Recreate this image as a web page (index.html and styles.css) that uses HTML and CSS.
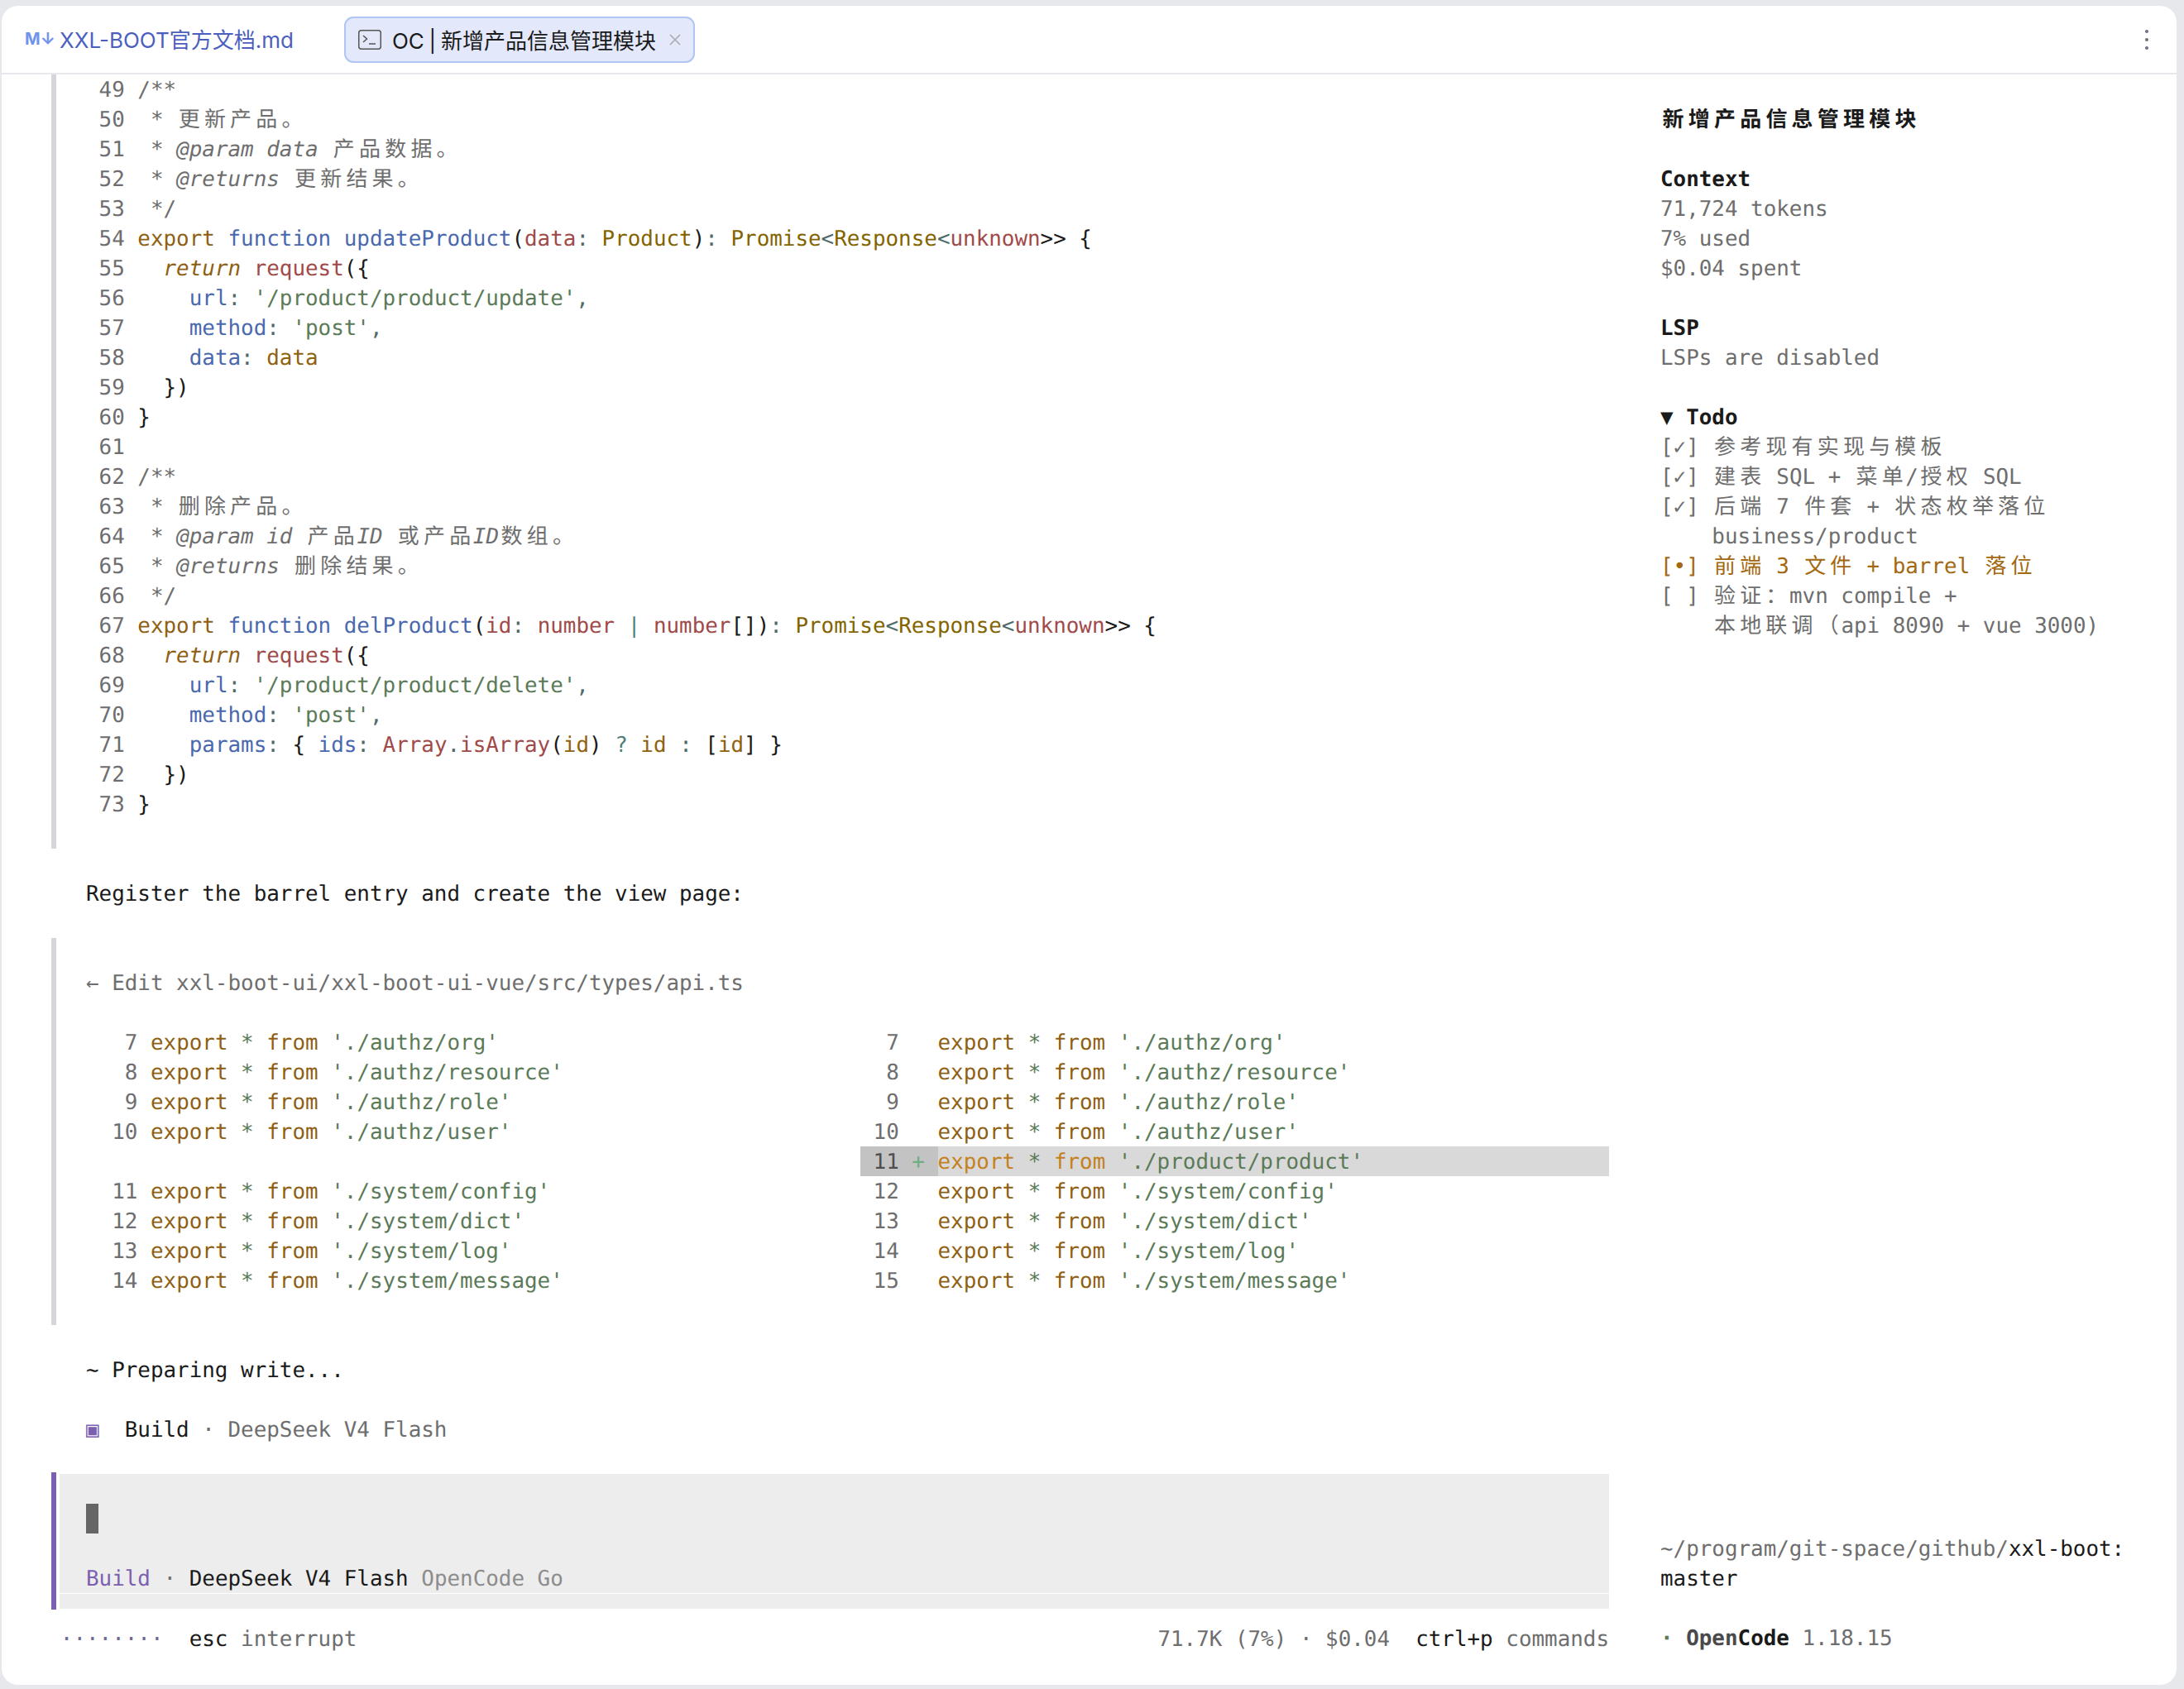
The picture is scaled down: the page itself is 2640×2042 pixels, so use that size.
FILE: index.html
```html
<!DOCTYPE html>
<html lang="zh-CN">
<head>
    <meta charset="UTF-8">
    <meta name="viewport" content="width=device-width, initial-scale=1.0">
    <title>OC | 新增产品信息管理模块</title>
    <link rel="stylesheet" href="styles.css">
</head>
<body>
    <div class="window">
        <header class="tabs">
            <div class="tab">
                <span class="md-mark">M↓</span>
                <span>XXL-BOOT官方文档.md</span>
            </div>
            <div class="tab tab-active">
                <svg class="term-icon" viewBox="0 0 28 24" width="28" height="24">
                    <rect x="0.75" y="0.75" width="26.5" height="22.5" rx="3" fill="none" stroke="#555" stroke-width="1.5"/>
                    <path d="M6 7l4.5 4L6 15M13 17h8" fill="none" stroke="#555" stroke-width="1.5"/>
                </svg>
                <span class="tab-title">OC | 新增产品信息管理模块</span>
                <svg class="close-icon" viewBox="0 0 16 14" width="16" height="14">
                    <path d="M2 1l12 12M14 1L2 13" fill="none" stroke="#a9a9ad" stroke-width="1.6"/>
                </svg>
            </div>
            <div class="kebab"><i></i><i></i><i></i></div>
        </header>

        <div class="term">
            <main class="main">
                <div class="tool">
                    <div class="row"><span class="ln"> 49</span> <span class="cm">/**</span></div>
                    <div class="row"><span class="ln"> 50</span> <span class="cm"> * <span class="zh">更新产品。</span></span></div>
                    <div class="row"><span class="ln"> 51</span> <span class="cm"> * <em>@param data</em> <span class="zh">产品数据。</span></span></div>
                    <div class="row"><span class="ln"> 52</span> <span class="cm"> * <em>@returns</em> <span class="zh">更新结果。</span></span></div>
                    <div class="row"><span class="ln"> 53</span> <span class="cm"> */</span></div>
                    <div class="row"><span class="ln"> 54</span> <span class="kw">export</span> <span class="fn">function updateProduct</span>(<span class="pr">data</span><span class="pu">:</span> <span class="ty">Product</span>)<span class="pu">:</span> <span class="ty">Promise</span><span class="pu">&lt;</span><span class="ty">Response</span><span class="pu">&lt;</span><span class="pr">unknown</span>&gt;&gt; {</div>
                    <div class="row"><span class="ln"> 55</span>   <em class="kw">return</em> <span class="pr">request</span>({</div>
                    <div class="row"><span class="ln"> 56</span>     <span class="fn">url</span><span class="pu">:</span> <span class="st">'/product/product/update'</span><span class="pu">,</span></div>
                    <div class="row"><span class="ln"> 57</span>     <span class="fn">method</span><span class="pu">:</span> <span class="st">'post'</span><span class="pu">,</span></div>
                    <div class="row"><span class="ln"> 58</span>     <span class="fn">data</span><span class="pu">:</span> <span class="vr">data</span></div>
                    <div class="row"><span class="ln"> 59</span>   })</div>
                    <div class="row"><span class="ln"> 60</span> }</div>
                    <div class="row"><span class="ln"> 61</span></div>
                    <div class="row"><span class="ln"> 62</span> <span class="cm">/**</span></div>
                    <div class="row"><span class="ln"> 63</span> <span class="cm"> * <span class="zh">删除产品。</span></span></div>
                    <div class="row"><span class="ln"> 64</span> <span class="cm"> * <em>@param id</em> <span class="zh">产品</span><em>ID</em> <span class="zh">或产品</span><em>ID</em><span class="zh">数组。</span></span></div>
                    <div class="row"><span class="ln"> 65</span> <span class="cm"> * <em>@returns</em> <span class="zh">删除结果。</span></span></div>
                    <div class="row"><span class="ln"> 66</span> <span class="cm"> */</span></div>
                    <div class="row"><span class="ln"> 67</span> <span class="kw">export</span> <span class="fn">function delProduct</span>(<span class="pr">id</span><span class="pu">:</span> <span class="pr">number</span> <span class="op">|</span> <span class="pr">number</span>[])<span class="pu">:</span> <span class="ty">Promise</span><span class="pu">&lt;</span><span class="ty">Response</span><span class="pu">&lt;</span><span class="pr">unknown</span>&gt;&gt; {</div>
                    <div class="row"><span class="ln"> 68</span>   <em class="kw">return</em> <span class="pr">request</span>({</div>
                    <div class="row"><span class="ln"> 69</span>     <span class="fn">url</span><span class="pu">:</span> <span class="st">'/product/product/delete'</span><span class="pu">,</span></div>
                    <div class="row"><span class="ln"> 70</span>     <span class="fn">method</span><span class="pu">:</span> <span class="st">'post'</span><span class="pu">,</span></div>
                    <div class="row"><span class="ln"> 71</span>     <span class="fn">params</span><span class="pu">:</span> { <span class="fn">ids</span><span class="pu">:</span> <span class="pr">Array</span><span class="pu">.</span><span class="pr">isArray</span>(<span class="vr">id</span>) <span class="op">?</span> <span class="vr">id</span> <span class="pu">:</span> [<span class="vr">id</span>] }</div>
                    <div class="row"><span class="ln"> 72</span>   })</div>
                    <div class="row"><span class="ln"> 73</span> }</div>
                    <div class="row"></div>
                </div>

                <div class="row"></div>
                <div class="row">Register the barrel entry and create the view page:</div>
                <div class="row"></div>

                <div class="tool">
                    <div class="row"></div>
                    <div class="row muted">← Edit xxl-boot-ui/xxl-boot-ui-vue/src/types/api.ts</div>
                    <div class="row"></div>
                    <div class="diff">
                        <div class="diff-left">
                            <div class="row"><span class="ln">   7</span> <span class="kw">export</span> <span class="st">*</span> <span class="kw">from</span> <span class="st">'./authz/org'</span></div>
                            <div class="row"><span class="ln">   8</span> <span class="kw">export</span> <span class="st">*</span> <span class="kw">from</span> <span class="st">'./authz/resource'</span></div>
                            <div class="row"><span class="ln">   9</span> <span class="kw">export</span> <span class="st">*</span> <span class="kw">from</span> <span class="st">'./authz/role'</span></div>
                            <div class="row"><span class="ln">  10</span> <span class="kw">export</span> <span class="st">*</span> <span class="kw">from</span> <span class="st">'./authz/user'</span></div>
                            <div class="row"></div>
                            <div class="row"><span class="ln">  11</span> <span class="kw">export</span> <span class="st">*</span> <span class="kw">from</span> <span class="st">'./system/config'</span></div>
                            <div class="row"><span class="ln">  12</span> <span class="kw">export</span> <span class="st">*</span> <span class="kw">from</span> <span class="st">'./system/dict'</span></div>
                            <div class="row"><span class="ln">  13</span> <span class="kw">export</span> <span class="st">*</span> <span class="kw">from</span> <span class="st">'./system/log'</span></div>
                            <div class="row"><span class="ln">  14</span> <span class="kw">export</span> <span class="st">*</span> <span class="kw">from</span> <span class="st">'./system/message'</span></div>
                        </div>
                        <div class="diff-right">
                            <div class="row"><span class="ln">  7</span>   <span class="kw">export</span> <span class="st">*</span> <span class="kw">from</span> <span class="st">'./authz/org'</span></div>
                            <div class="row"><span class="ln">  8</span>   <span class="kw">export</span> <span class="st">*</span> <span class="kw">from</span> <span class="st">'./authz/resource'</span></div>
                            <div class="row"><span class="ln">  9</span>   <span class="kw">export</span> <span class="st">*</span> <span class="kw">from</span> <span class="st">'./authz/role'</span></div>
                            <div class="row"><span class="ln"> 10</span>   <span class="kw">export</span> <span class="st">*</span> <span class="kw">from</span> <span class="st">'./authz/user'</span></div>
                            <div class="row row-added">
                                <span class="gutter"><span class="ln-add"> 11</span> <span class="plus">+</span> </span><span class="added-code"><span class="kw-add">export</span> <span class="st">*</span> <span class="kw-add">from</span> <span class="st">'./product/product'</span></span>
                            </div>
                            <div class="row"><span class="ln"> 12</span>   <span class="kw">export</span> <span class="st">*</span> <span class="kw">from</span> <span class="st">'./system/config'</span></div>
                            <div class="row"><span class="ln"> 13</span>   <span class="kw">export</span> <span class="st">*</span> <span class="kw">from</span> <span class="st">'./system/dict'</span></div>
                            <div class="row"><span class="ln"> 14</span>   <span class="kw">export</span> <span class="st">*</span> <span class="kw">from</span> <span class="st">'./system/log'</span></div>
                            <div class="row"><span class="ln"> 15</span>   <span class="kw">export</span> <span class="st">*</span> <span class="kw">from</span> <span class="st">'./system/message'</span></div>
                        </div>
                    </div>
                    <div class="row"></div>
                </div>

                <div class="row"></div>
                <div class="row">~ Preparing write...</div>
                <div class="row"></div>
                <div class="row"><span class="violet">▣</span>  Build <span class="muted">· DeepSeek V4 Flash</span></div>
                <div class="row"></div>

                <div class="prompt">
                    <div class="prompt-box">
                        <div class="row"></div>
                        <div class="row"><span class="cursor"></span></div>
                        <div class="row"></div>
                        <div class="row"><span class="violet">Build</span> <span class="muted">·</span> DeepSeek V4 Flash <span class="faint">OpenCode Go</span></div>
                    </div>
                    <div class="prompt-end"></div>
                </div>

                <div class="row status">
                    <span><span class="spinner">········</span>  esc <span class="muted">interrupt</span></span>
                    <span><span class="muted">71.7K (7%) · $0.04</span>  ctrl+p <span class="muted">commands</span></span>
                </div>
            </main>

            <aside class="side">
                <div class="row"></div>
                <div class="row"><strong class="zh">新增产品信息管理模块</strong></div>
                <div class="row"></div>
                <div class="row"><strong>Context</strong></div>
                <div class="row muted">71,724 tokens</div>
                <div class="row muted">7% used</div>
                <div class="row muted">$0.04 spent</div>
                <div class="row"></div>
                <div class="row"><strong>LSP</strong></div>
                <div class="row muted">LSPs are disabled</div>
                <div class="row"></div>
                <div class="row"><strong>▼ Todo</strong></div>
                <div class="row muted">[✓] <span class="zh">参考现有实现与模板</span></div>
                <div class="row muted">[✓] <span class="zh">建表</span> SQL + <span class="zh">菜单</span>/<span class="zh">授权</span> SQL</div>
                <div class="row muted">[✓] <span class="zh">后端</span> 7 <span class="zh">件套</span> + <span class="zh">状态枚举落位</span></div>
                <div class="row muted">    business/product</div>
                <div class="row amber">[•] <span class="zh">前端</span> 3 <span class="zh">文件</span> + barrel <span class="zh">落位</span></div>
                <div class="row muted">[ ] <span class="zh">验证：</span>mvn compile +</div>
                <div class="row muted">    <span class="zh">本地联调（</span>api 8090 + vue 3000)</div>

                <div class="side-foot">
                    <div class="row"><span class="muted">~/program/git-space/github/</span>xxl-boot:</div>
                    <div class="row">master</div>
                    <div class="row"></div>
                    <div class="row"><strong class="green">·</strong> <strong><span class="open">Open</span>Code</strong> <span class="muted">1.18.15</span></div>
                    <div class="row"></div>
                </div>
            </aside>
        </div>
    </div>
</body>
</html>
```

FILE: styles.css
```css
html, body {
    margin: 0;
    padding: 0;
    background: #e7e8ec;
}
.window {
    width: 2629px;
    height: 2030px;
    margin: 7px 0 0 2px;
    background: #fff;
    border-radius: 20px;
    overflow: hidden;
}

/* tab bar */
.tabs {
    display: flex;
    align-items: center;
    height: 81px;
    border-bottom: 2px solid #e8e8ec;
    padding-left: 28px;
    padding-right: 34px;
    font-family: Inter, "Noto Sans CJK SC", sans-serif;
    font-size: 26px;
    color: #1a1a1a;
}
.tab {
    display: flex;
    align-items: center;
    color: #4c5fbe;
    margin-right: 61px;
    padding-bottom: 2px;
}
.md-mark {
    font-size: 20px;
    font-weight: 700;
    color: #7093ec;
    width: 42px;
}
.tab-active {
    height: 52px;
    padding: 0 14px 0 15px;
    background: #e3e9fb;
    border: 2px solid #b1c5f5;
    border-radius: 11px;
    color: #1a1a1a;
    margin-right: 0;
}
.tab-title {
    word-spacing: -1.5px;
}
.term-icon {
    margin-right: 13px;
}
.close-icon {
    margin-left: 15px;
}
.kebab {
    margin-left: auto;
    display: flex;
    flex-direction: column;
    gap: 6px;
}
.kebab i {
    display: block;
    width: 4px;
    height: 4px;
    border-radius: 50%;
    background: #6c6f80;
}

/* terminal grid: one cell is 15.6 x 36 */
.term {
    display: flex;
    font-family: "DejaVu Sans Mono", monospace;
    font-size: 25.9px;
    text-rendering: geometricPrecision;
    color: #1a1a1a;
}
.main {
    width: 1841px;
    margin-left: 102px;
    flex: none;
}
.side {
    width: 600px;
    margin-left: 62px;
    display: flex;
    flex-direction: column;
    height: 1944px;
}
.side-foot {
    margin-top: auto;
}
.row {
    height: 36px;
    line-height: 39px;
    white-space: pre;
}
em {
    font-style: italic;
}
.zh {
    font-family: "Noto Sans CJK SC", sans-serif;
    font-size: 26px;
    font-style: normal;
    line-height: 0;
    letter-spacing: 5.2px;
    padding-left: 2.6px;
    margin-right: -2.6px;
}

/* tool blocks */
.tool {
    margin-left: -42px;
    padding-left: 36px;
    border-left: 6px solid #d5d6db;
}
.diff {
    display: flex;
}
.diff-left {
    width: 936px;
}
.diff-right {
    width: 905px;
}
.row-added {
    display: flex;
}
.gutter {
    width: 93.6px;
    background: #c3c3c3;
    height: 36px;
}
.added-code {
    flex: 1;
    background: #d9d9d9;
    height: 36px;
}

/* prompt */
.prompt {
    margin-left: -42px;
    margin-top: -2px;
    margin-bottom: 17px;
    padding: 2px 0 1px;
    border-left: 6px solid #7b5fb0;
}
.prompt-box {
    margin-left: 4px;
    padding-left: 32px;
    background: #ededed;
    border-bottom: 1px solid #fff;
}
.prompt-end {
    margin-left: 4px;
    height: 18px;
    background: #ededed;
}
.cursor {
    display: inline-block;
    width: 15px;
    height: 36px;
    background: #666;
    vertical-align: top;
}
.status {
    display: flex;
    justify-content: space-between;
    margin-left: -31.2px;
}
.spinner {
    color: #6d6a92;
}

/* colours */
.ln { color: #6e6e70; }
.ln-add { color: #4f4f4f; }
.cm, .muted { color: #6e6e6e; }
.faint { color: #8c8c8c; }
.kw { color: #8f5f14; }
.kw-add { color: #c4811f; }
.fn { color: #4a68ad; }
.pr { color: #a04a4a; }
.ty { color: #836400; }
.vr { color: #8f6210; }
.st { color: #5b7a58; }
.op { color: #4f7f7a; }
.pu { color: #4f6a6a; }
.plus { color: #6fae80; }
.violet { color: #7b5fb0; }
.amber { color: #a2690f; }
.green { color: #5b7a58; }
.open { color: #4a4a4a; }
```
